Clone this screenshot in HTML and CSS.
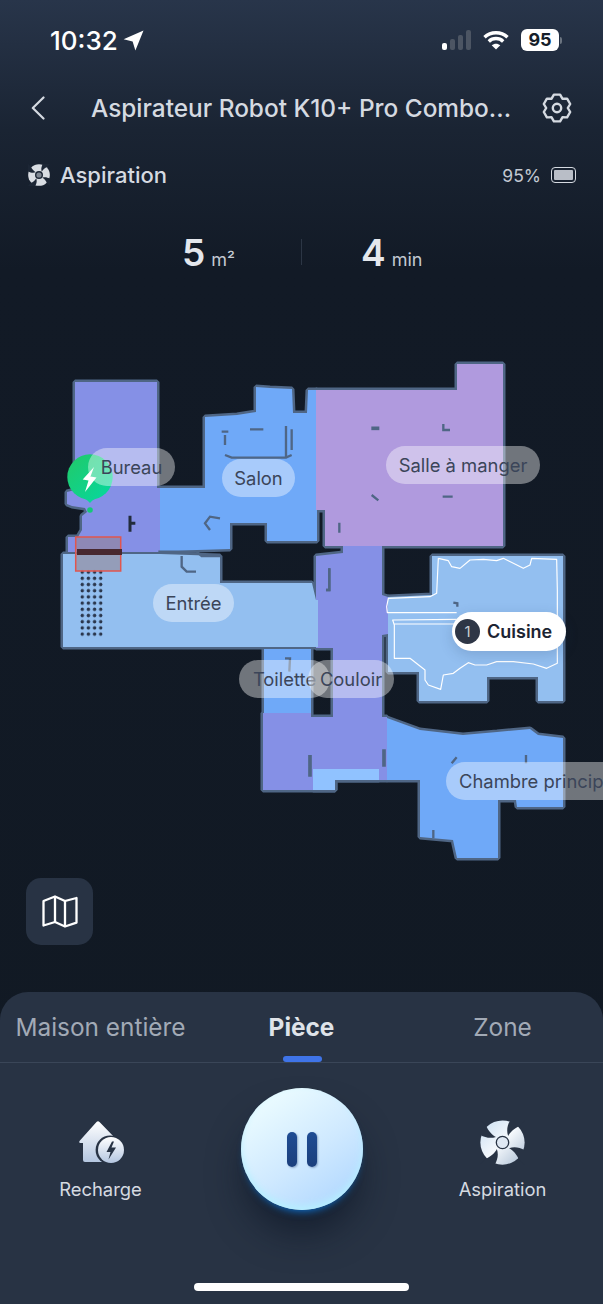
FILE: index.html
```html
<!DOCTYPE html>
<html lang="fr">

<head>
	<meta charset="utf-8">
	<title>Aspirateur Robot K10+ Pro Combo</title>
	<link rel="stylesheet" href="styles.css">
</head>

<body>
	<svg class="defs" width="0" height="0">
		<defs>
			<linearGradient id="iconGrad" x1="0" y1="0" x2="0" y2="1">
				<stop offset="0" stop-color="#ffffff"></stop>
				<stop offset="1" stop-color="#b4c6e0"></stop>
			</linearGradient>
			<linearGradient id="fanGrad" x1="0" y1="0" x2="1" y2="1">
				<stop offset="0" stop-color="#c9def2"></stop>
				<stop offset=".5" stop-color="#f4f8fc"></stop>
				<stop offset="1" stop-color="#a9bcd2"></stop>
			</linearGradient>
			<linearGradient id="greenGrad" x1="0" y1="0" x2="1" y2="1">
				<stop offset="0" stop-color="#22c968"></stop>
				<stop offset="1" stop-color="#05d8a0"></stop>
			</linearGradient>
			<pattern id="dots" x="79.2" y="569" width="6.15" height="6.2" patternUnits="userSpaceOnUse">
				<circle cx="3.07" cy="3.1" r="1.7" fill="#2a364c"></circle>
			</pattern>
			<path id="notch" d="M16.8-1C14.5 2.5 14 5.5 15 8.5 16 6.5 18 4.5 21.5 3L25-1Z"></path>
			<g id="notches">
				<use href="#notch"></use>
				<use href="#notch" transform="rotate(90 12 12)"></use>
				<use href="#notch" transform="rotate(180 12 12)"></use>
				<use href="#notch" transform="rotate(270 12 12)"></use>
			</g>
			<g id="rooms">
				<polygon class="violet" points="75,382 157,382 157,488 160,488 160,552 68,552 68,537 78,537 82,530 82,516 87,512 85,508 72,506 67,504 67,492 75,490"></polygon>
				<polygon class="violet" points="316,556 343,553 343,546 382,546 382,595 388,597 388,634 382,635 382,717 387,717 387,780 335,780 335,790 263,790 263,713 311,713 311,717 333,717 333,648 316,648"></polygon>
				<polygon class="blue" points="264,649 311,649 311,713 264,713"></polygon>
				<polygon class="blue" points="205,417 237,415 256,412 256,387 270,388 292,389 293,413 307,413 308,390 317,390 317,541 267,541 267,523 230,523 230,549 197,550 160,552 160,488 205,488"></polygon>
				<polygon class="mauve" points="316,390 457,390 457,364 503,364 503,546 325,546 325,510 316,510"></polygon>
				<polygon class="sky" points="63,554 160,554 220,556 220,583 288,583 312,583 316,600 318,600 318,647 63,647"></polygon>
				<polygon class="sky" points="432,556 563,556 563,701 538,701 538,677 487,677 487,701 419,701 419,672 388,672 388,597 432,595"></polygon>
				<polygon class="blue" points="387,718 420,730 463,735 497,732 530,729 538,735 563,738 563,807 517,807 516,800 498,800 498,858 457,858 453,840 420,837 420,780 387,780"></polygon>
				<polygon class="pale" points="313,769 379,769 379,780 335,780 335,790 313,790"></polygon>
			</g>
		</defs>
	</svg>

	<div class="app">
		<div class="status-bar">
			<div class="status-time">
				<span>10:32</span>
				<svg width="21" height="21" viewBox="0 0 21 21">
					<path d="M20.5.5 12.4 20.6 9.6 11.5.6 9.2Z" fill="#fff"></path>
				</svg>
			</div>
			<div class="status-right">
				<div class="signal">
					<i class="bar-1"></i><i class="bar-2"></i><i class="bar-3"></i><i class="bar-4"></i>
				</div>
				<svg width="26" height="20" viewBox="0 0 26 20" fill="none" stroke="#fff" stroke-width="3.4">
					<path d="M1.5 7.2C7.8 1.2 18.2 1.2 24.5 7.2"></path>
					<path d="M5.8 11.4C9.8 7.6 16.2 7.6 20.2 11.4"></path>
					<path d="M13 19.6 8.7 15.3C11.2 13.1 14.8 13.1 17.3 15.3Z" fill="#fff" stroke="none"></path>
				</svg>
				<div class="status-battery">95</div>
				<i class="status-battery-tip"></i>
			</div>
		</div>

		<div class="header">
			<svg width="14" height="24" viewBox="0 0 14 24" fill="none" stroke="#d5dae1" stroke-width="2.2" stroke-linecap="round" stroke-linejoin="round">
				<path d="M12.5 1.5 1.8 12 12.5 22.5"></path>
			</svg>
			<div class="header-title">Aspirateur Robot K10+ Pro Combo...</div>
			<svg width="30" height="30" viewBox="0 0 30 30" fill="none" stroke="#d5dae1" stroke-width="2.4" stroke-linejoin="round">
				<path d="M11.9 1.6H18.1L20.4 5.7 25.1 5.6 28.2 11 25.8 15 28.2 19 25.1 24.4 20.4 24.3 18.1 28.4H11.9L9.6 24.3 4.9 24.4 1.8 19 4.2 15 1.8 11 4.9 5.6 9.6 5.7Z"></path>
				<circle cx="15" cy="15" r="4.2"></circle>
			</svg>
		</div>

		<div class="mode-row">
			<div class="mode-left">
				<svg width="22" height="22" viewBox="0 0 24 24">
					<circle cx="12" cy="12" r="11.8" fill="#d9dde3"></circle>
					<use href="#notches" fill="#1c2635"></use>
					<circle cx="12" cy="12" r="3.6" fill="#7f8792" stroke="#1c2635" stroke-width="1.5"></circle>
				</svg>
				<span>Aspiration</span>
			</div>
			<div class="mode-right">
				<span>95%</span>
				<div class="mini-battery"><i></i></div>
			</div>
		</div>

		<div class="stats">
			<div class="stat stat-area"><b>5</b><span>m²</span></div>
			<i class="stat-sep"></i>
			<div class="stat stat-time"><b>4</b><span>min</span></div>
		</div>

		<div class="map">
			<svg class="plan" width="603" height="720" viewBox="0 272 603 720">
				<!-- walls = stroked rooms, then the fills again on top so inner edges vanish -->
				<use href="#rooms" class="walls"></use>
				<use href="#rooms"></use>

				<rect x="79" y="569" width="25" height="68" fill="url(#dots)"></rect>

				<!-- obstacles, traced at 3x -->
				<g transform="translate(50 350) scale(.33333)" class="bits">
					<path d="M515 245h20M525 255v30M600 238h40M708 228v92M725 238v62M525 315l20 8h163l17-8"></path>
					<path d="M510 505 480 500 465 520 480 540M395 618v32l15 15h28M325 605H440M838 655v65h-10"></path>
					<path d="M240 497v48M240 520h16" class="bits-dark"></path>
					<path d="M440 605 455 618H510"></path>
				</g>
				<g transform="translate(300 350) scale(.33333)" class="bits">
					<path d="M214 235h24" class="bits-thick"></path>
					<path d="M430 222v18h20M215 435l20 16M428 440h30M118 518v30M88 655v65H78M460 758l12 2v10"></path>
				</g>
				<g transform="translate(230 640) scale(.33333)" class="bits">
					<path d="M165 55h15l-2 40M665 370l15-18M888 345v25M610 570v25"></path>
					<path d="M240 345v65M462 328v52" class="bits-thick"></path>
				</g>

				<!-- cleaned path in the kitchen -->
				<g transform="translate(300 350) scale(.33333)">
					<path class="trace" d="M415 625 445 632 455 650 480 655 510 630 550 628 590 632 610 625 640 640 670 655 690 645 695 625 770 628 772 720 772 940 740 955 700 942 640 935 590 935 560 945 525 945 505 938 480 955 460 970 430 975 422 1018 385 1005 375 990 375 960 330 925 283 925 283 825 278 810 470 808M470 822H283M470 788H262L260 770 265 745 390 740 410 730 415 625"></path>
				</g>

				<!-- dock -->
				<path d="M74 493C83 498 87 499 90 503 93 499 97 498 106 493Z" fill="#0bd596"></path>
				<circle cx="90" cy="477" r="22.7" fill="url(#greenGrad)"></circle>
				<circle cx="90" cy="510" r="2.8" fill="#14c878"></circle>
				<path d="M94 467 82.7 479.5 88.5 480.5 85 492 96.5 477.5 90.5 476.5Z" fill="#fff"></path>

				<!-- zone being cleaned -->
				<rect x="75.7" y="537" width="45" height="34" class="zone"></rect>
				<path d="M77 552h45" stroke="#48282f" stroke-width="6"></path>
			</svg>

			<div class="room room-bureau">Bureau</div>
			<div class="room room-salon">Salon</div>
			<div class="room room-salle">Salle à manger</div>
			<div class="room room-entree">Entrée</div>
			<div class="room room-toilette">Toilette</div>
			<div class="room room-couloir">Couloir</div>
			<div class="room room-chambre">Chambre princip</div>
			<div class="room-active"><span class="room-num">1</span>Cuisine</div>

			<div class="map-btn">
				<svg width="36" height="33" viewBox="0 0 36 33" fill="none" stroke="#fff" stroke-width="2.3" stroke-linejoin="round">
					<path d="M1.5 6 13 1.5 23 6 34.5 3v24.6L23 31.5 13 27 1.5 30.5Z"></path>
					<path d="M13 1.5V27M23 6v25.5"></path>
				</svg>
			</div>
		</div>

		<div class="sheet">
			<div class="tabs">
				<div class="tab">Maison entière</div>
				<div class="tab tab-on">Pièce</div>
				<div class="tab">Zone</div>
			</div>
			<div class="actions">
				<div class="action action-home">
					<svg width="48" height="45" viewBox="0 0 48 45">
						<path d="M18.5 2Q20 .5 21.5 2L38 19V42H7Q5 42 5 40V23H2Q.5 22.5 1.5 21Z" fill="url(#iconGrad)"></path>
						<circle cx="32" cy="30" r="14.4" fill="#283344"></circle>
						<circle cx="33" cy="30" r="13" fill="url(#iconGrad)"></circle>
						<path d="M34 21.5 28.5 32H32.5L30.5 39.5 38 27.5H33.5L36 21.5Z" fill="#283344"></path>
					</svg>
					<span>Recharge</span>
				</div>
				<div class="pause-btn"><i></i><i></i></div>
				<div class="action">
					<svg width="45" height="45" viewBox="0 0 24 24">
						<circle cx="12" cy="12" r="11.8" fill="url(#fanGrad)"></circle>
						<use href="#notches" fill="#283344"></use>
						<circle cx="12" cy="12" r="3.3" fill="#dfe8f3" stroke="#283344" stroke-width=".7"></circle>
					</svg>
					<span>Aspiration</span>
				</div>
			</div>
			<div class="home-bar"></div>
		</div>
	</div>
</body>

</html>
```

FILE: styles.css
```css
html,
body {
	margin: 0;
	padding: 0;
}

body {
	font-family: "Inter", "Noto Sans", sans-serif;
	background: #111923;
}

.defs {
	position: absolute;
}

.app {
	width: 603px;
	height: 1304px;
	overflow: hidden;
	display: flex;
	flex-direction: column;
	background: linear-gradient(#28354a 0, #1a2433 130px, #121a26 270px, #111923 100%);
	color: #d5dae1;
}

/* status bar */
.status-bar {
	height: 80px;
	flex: none;
	display: flex;
	align-items: center;
	justify-content: space-between;
	padding: 0 41px 0 50px;
}

.status-time {
	display: flex;
	align-items: center;
	gap: 5px;
	font-size: 26px;
	font-weight: 500;
	color: #fff;
}

.status-right {
	display: flex;
	align-items: center;
}

.signal {
	display: flex;
	align-items: flex-end;
	gap: 3px;
	height: 20px;
	margin-right: 12px;
}

.signal i {
	display: block;
	width: 5px;
	border-radius: 2px;
	background: #4c5563;
}

.signal .bar-1 {
	height: 7px;
	background: #fff;
}

.signal .bar-2 {
	height: 11px;
}

.signal .bar-3 {
	height: 15px;
}

.signal .bar-4 {
	height: 20px;
}

.status-battery {
	width: 38px;
	height: 22px;
	margin-left: 12px;
	border-radius: 6px;
	background: #fff;
	color: #161e2a;
	font-size: 18px;
	font-weight: 700;
	line-height: 22px;
	text-align: center;
}

.status-battery-tip {
	display: block;
	width: 2px;
	height: 7px;
	margin-left: 1px;
	border-radius: 0 2px 2px 0;
	background: #6b7480;
}

/* header */
.header {
	height: 56px;
	flex: none;
	display: flex;
	align-items: center;
	padding: 0 31px;
}

.header-title {
	flex: 1;
	padding-left: 15px;
	font-size: 24.4px;
	font-weight: 500;
	text-align: center;
	white-space: nowrap;
}

.mode-row {
	height: 40px;
	flex: none;
	margin-top: 19px;
	padding: 0 27px 0 28px;
	display: flex;
	align-items: center;
	justify-content: space-between;
}

.mode-left {
	display: flex;
	align-items: center;
	gap: 10px;
	font-size: 22px;
	font-weight: 500;
}

.mode-right {
	display: flex;
	align-items: center;
	gap: 10px;
	font-size: 17.5px;
	color: #c3c9d2;
}

.mini-battery {
	width: 25px;
	height: 16px;
	box-sizing: border-box;
	padding: 2px;
	border: 1.5px solid #d5dae1;
	border-radius: 4px;
}

.mini-battery i {
	display: block;
	height: 100%;
	border-radius: 1px;
	background: #b9bec7;
}

/* area and time */
.stats {
	height: 40px;
	flex: none;
	margin-top: 37px;
	display: flex;
	align-items: center;
}

.stat {
	display: flex;
	align-items: baseline;
	gap: 6px;
	font-size: 18px;
	color: #c3c9d2;
}

.stat b {
	font-size: 37px;
	font-weight: 600;
	color: #e4e7ec;
}

.stat-area {
	width: 235px;
	justify-content: flex-end;
	margin-right: 66px;
}

.stat-time {
	margin-left: 59px;
}

.stat-sep {
	display: block;
	width: 1px;
	height: 26px;
	background: #2c3645;
}

/* map */
.map {
	flex: 1;
	position: relative;
	overflow: hidden;
}

.plan {
	position: absolute;
	left: 0;
	top: 0;
}

.walls {
	stroke: #4f6685;
	stroke-width: 5;
	stroke-linejoin: bevel;
}

.violet {
	fill: #8590e6;
}

.blue {
	fill: #6fa9f8;
}

.mauve {
	fill: #b09ade;
}

.sky {
	fill: #93bff0;
}

.pale {
	fill: #90c2ff;
}

.bits {
	fill: none;
	stroke: #4f6685;
	stroke-width: 7;
}

.bits-thick {
	stroke-width: 11;
}

.bits-dark {
	stroke: #222c3c;
	stroke-width: 9;
}

.trace {
	fill: none;
	stroke: #fff;
	stroke-width: 3.5;
	stroke-linejoin: round;
}

.zone {
	fill: rgba(150, 130, 140, .55);
	stroke: #e0564f;
	stroke-width: 1.5;
}

/* room labels sit on the plan */
.room {
	position: absolute;
	height: 38px;
	line-height: 38px;
	border-radius: 19px;
	background: rgba(255, 255, 255, .4);
	color: #3b4559;
	font-size: 18.4px;
	text-align: center;
	white-space: nowrap;
}

.room-bureau {
	left: 88px;
	top: 176px;
	width: 87px;
}

.room-salon {
	left: 222px;
	top: 187px;
	width: 73px;
}

.room-salle {
	left: 386px;
	top: 174px;
	width: 154px;
}

.room-entree {
	left: 153px;
	top: 312px;
	width: 81px;
}

.room-toilette {
	left: 239px;
	top: 388px;
	width: 91px;
}

.room-couloir {
	left: 308px;
	top: 388px;
	width: 86px;
}

.room-chambre {
	left: 446px;
	top: 490px;
	width: 190px;
	padding-left: 13px;
	box-sizing: border-box;
	text-align: left;
}

.room-active {
	position: absolute;
	left: 452px;
	top: 340px;
	width: 114px;
	height: 39px;
	box-sizing: border-box;
	padding-left: 3px;
	display: flex;
	align-items: center;
	gap: 7px;
	border-radius: 20px;
	background: #fff;
	box-shadow: 0 4px 14px rgba(30, 50, 90, .18);
	color: #1c2432;
	font-size: 18px;
	font-weight: 600;
}

.room-num {
	width: 25px;
	height: 25px;
	border-radius: 50%;
	background: #2e3646;
	color: #c9ced6;
	font-size: 15px;
	font-weight: 400;
	line-height: 25px;
	text-align: center;
}

.map-btn {
	position: absolute;
	left: 26px;
	bottom: 47px;
	width: 67px;
	height: 67px;
	display: flex;
	align-items: center;
	justify-content: center;
	border-radius: 15px;
	background: #283344;
}

/* bottom sheet */
.sheet {
	height: 312px;
	flex: none;
	position: relative;
	border-radius: 28px 28px 0 0;
	background: #283344;
}

.tabs {
	height: 70px;
	display: grid;
	grid-template-columns: repeat(3, 1fr);
	border-bottom: 1px solid #3a4658;
}

.tab {
	position: relative;
	text-align: center;
	padding-top: 20px;
	font-size: 24.4px;
	color: #a2aab6;
}

.tab-on {
	font-weight: 700;
	color: #dfe3e9;
}

.tab-on::after {
	content: "";
	position: absolute;
	left: 50%;
	bottom: 0;
	width: 39px;
	height: 6px;
	margin-left: -19px;
	border-radius: 3px;
	background: #3f74e8;
}

.actions {
	display: grid;
	grid-template-columns: repeat(3, 1fr);
	justify-items: center;
	padding-top: 25px;
}

.action {
	display: flex;
	flex-direction: column;
	align-items: center;
	height: 122px;
	padding-top: 32px;
	font-size: 18.4px;
	line-height: 22px;
	color: #d5dae1;
}

.action svg {
	margin-bottom: 13px;
}

.action-home svg {
	margin-left: 3px;
}

.pause-btn {
	width: 122px;
	height: 122px;
	display: flex;
	align-items: center;
	justify-content: center;
	gap: 10px;
	border-radius: 50%;
	background: linear-gradient(145deg, #f0ffff 5%, #cfe9ff 55%, #a9d3ff 100%);
	box-shadow: inset 0 -4px 7px #b6efff, 0 6px 8px -5px #0f78dc, 0 26px 36px -4px rgba(10, 20, 35, .65);
}

.pause-btn i {
	display: block;
	width: 10px;
	height: 35px;
	border-radius: 5px;
	background: linear-gradient(#1f4c94, #1b3f7c);
	box-shadow: 1px 1px 2px rgba(40, 70, 120, .4);
}

.home-bar {
	position: absolute;
	left: 194px;
	top: 291px;
	width: 215px;
	height: 8px;
	border-radius: 4px;
	background: #fff;
}
```
